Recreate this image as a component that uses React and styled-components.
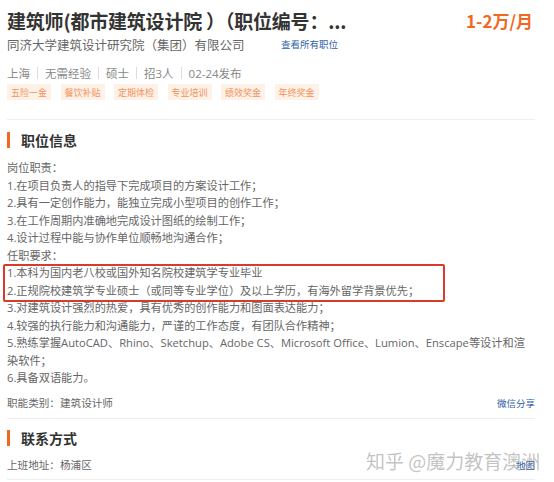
import React from 'react'
import styled, { createGlobalStyle } from 'styled-components'

const GlobalStyle = createGlobalStyle`
  body {
    margin: 0;
    background: #fff;
    font-family: "Open Sans", "Noto Sans CJK SC", sans-serif;
    color: #666;
  }
`

const Page = styled.div`
  position: relative;
  width: 528px;
  padding: 6px 0 0 7px;
`

const HeadRow = styled.div`
  display: flex;
  align-items: center;
  justify-content: space-between;
  height: 28px;
`

const Title = styled.h1`
  margin: 0;
  font-size: 19px;
  font-weight: 700;
  color: #333;
  font-family: "Noto Sans CJK SC", sans-serif;
  letter-spacing: -0.2px;
`

const Salary = styled.span`
  font-size: 17px;
  font-weight: 700;
  color: #f2681f;
  font-family: "Noto Sans CJK SC", sans-serif;
  margin-right: 2px;
`

const CompanyRow = styled.div`
  display: flex;
  align-items: center;
  height: 20px;
`

const Company = styled.span`
  font-size: 12.5px;
  color: #666;
  width: 274px;
`

const Link = styled.a`
  font-size: 9.5px;
  color: #2f5fa8;
  text-decoration: none;
  white-space: nowrap;
`

const Meta = styled.div`
  display: flex;
  align-items: center;
  height: 20px;
  margin-top: 9px;
  font-size: 11.5px;
  color: #888;
`

const Sep = styled.span`
  display: inline-block;
  width: 1px;
  height: 12px;
  background: #ddd;
  margin: 0 7px;
`

const Tags = styled.div`
  display: flex;
  gap: 9.5px;
  margin-top: 1px;
`

const Tag = styled.span`
  display: inline-flex;
  align-items: center;
  height: 16px;
  padding: 0 4px;
  background: #fdf1e8;
  color: #f4925a;
  font-size: 9px;
`

const Divider = styled.div`
  height: 1px;
  background: #eee;
  margin-top: ${p => p.$top || 0}px;
`

const SectionHead = styled.div`
  display: flex;
  align-items: center;
  height: 22px;
  margin-top: ${p => p.$top || 0}px;
`

const Bar = styled.span`
  width: 3px;
  height: 16px;
  background: #f2681f;
  margin-right: 11px;
`

const SectionTitle = styled.h2`
  margin: 0;
  font-size: 14px;
  font-weight: 700;
  color: #333;
  font-family: "Noto Sans CJK SC", sans-serif;
`

const Body = styled.div`
  margin-top: 8px;
  font-size: 11.2px;
  line-height: 17.5px;
  color: #666;
`

const Line = styled.div``

const Highlight = styled.div`
  position: relative;
  &::after {
    content: '';
    position: absolute;
    left: -4px;
    top: 0;
    width: 438px;
    height: 34px;
    border: 2px solid #d83a2c;
    border-radius: 2px;
    pointer-events: none;
  }
`

const InfoRow = styled.div`
  display: flex;
  align-items: center;
  justify-content: space-between;
  height: 20px;
  margin-top: ${p => p.$top || 0}px;
  font-size: 10.6px;
  color: #666;
`

const Watermark = styled.div`
  position: absolute;
  left: 366px;
  top: 447px;
  font-size: 19px;
  color: rgba(120, 120, 120, 0.45);
  font-family: "Noto Sans CJK SC", sans-serif;
  white-space: nowrap;
  pointer-events: none;
`

const duties = [
  '1.在项目负责人的指导下完成项目的方案设计工作；',
  '2.具有一定创作能力，能独立完成小型项目的创作工作；',
  '3.在工作周期内准确地完成设计图纸的绘制工作；',
  '4.设计过程中能与协作单位顺畅地沟通合作；',
]

const reqs = [
  '3.对建筑设计强烈的热爱，具有优秀的创作能力和图面表达能力；',
  '4.较强的执行能力和沟通能力，严谨的工作态度，有团队合作精神；',
  '5.熟练掌握AutoCAD、Rhino、Sketchup、Adobe CS、Microsoft Office、Lumion、Enscape等设计和渲染软件；',
  '6.具备双语能力。',
]

const tags = ['五险一金', '餐饮补贴', '定期体检', '专业培训', '绩效奖金', '年终奖金']

export default function App() {
  return (
    <Page>
      <GlobalStyle />
      <HeadRow>
        <Title>建筑师(都市建筑设计院 ）（职位编号：...</Title>
        <Salary>1-2万/月</Salary>
      </HeadRow>
      <CompanyRow>
        <Company>同济大学建筑设计研究院（集团）有限公司</Company>
        <Link href="#">查看所有职位</Link>
      </CompanyRow>
      <Meta>
        上海<Sep />无需经验<Sep />硕士<Sep />招3人<Sep />02-24发布
      </Meta>
      <Tags>
        {tags.map(t => (
          <Tag key={t}>{t}</Tag>
        ))}
      </Tags>
      <Divider $top={19} />
      <SectionHead $top={9}>
        <Bar />
        <SectionTitle>职位信息</SectionTitle>
      </SectionHead>
      <Body>
        <Line>岗位职责：</Line>
        {duties.map(d => (
          <Line key={d}>{d}</Line>
        ))}
        <Line>任职要求：</Line>
        <Highlight>
          <Line>1.本科为国内老八校或国外知名院校建筑学专业毕业</Line>
          <Line>2.正规院校建筑学专业硕士（或同等专业学位）及以上学历，有海外留学背景优先；</Line>
        </Highlight>
        {reqs.map(r => (
          <Line key={r}>{r}</Line>
        ))}
      </Body>
      <InfoRow $top={6}>
        <span>职能类别：建筑设计师</span>
        <Link href="#">微信分享</Link>
      </InfoRow>
      <Divider $top={5} />
      <SectionHead $top={8}>
        <Bar />
        <SectionTitle>联系方式</SectionTitle>
      </SectionHead>
      <InfoRow $top={6}>
        <span>上班地址：杨浦区</span>
        <Link href="#">地图</Link>
      </InfoRow>
      <Divider $top={4} />
      <Watermark>知乎 @魔力教育澳洲</Watermark>
    </Page>
  )
}
